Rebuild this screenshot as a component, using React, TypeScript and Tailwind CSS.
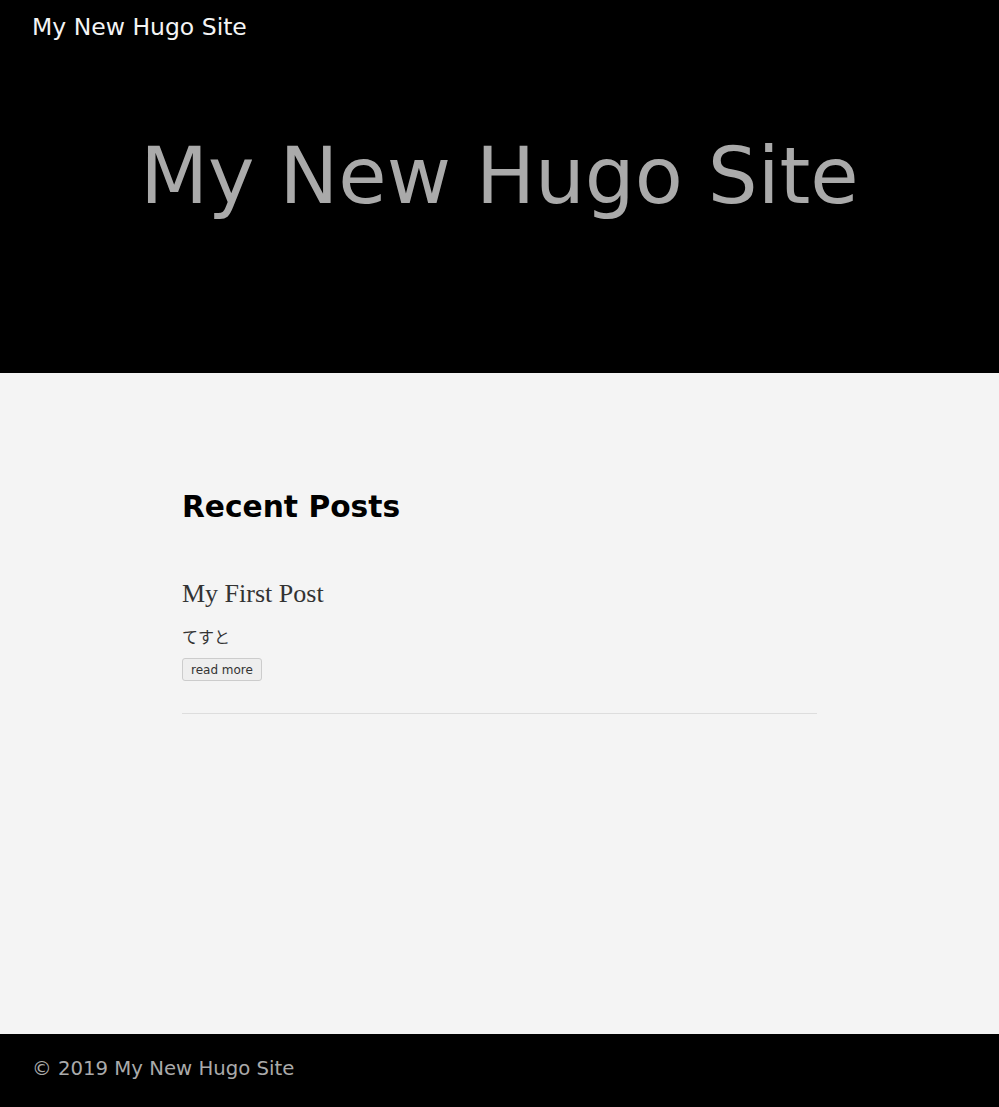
import React from "react";

export default function App() {
  const sans = { fontFamily: '"DejaVu Sans", "Noto Sans CJK JP", sans-serif' };
  return (
    <div className="min-h-[1107px] flex flex-col bg-[#f4f4f4]" style={sans}>
      <header className="bg-black h-[373px] flex flex-col">
        <div className="px-[32px] pt-[12px] text-[23.5px] leading-[30px] text-[#f4f4f4]">My New Hugo Site</div>
        <div className="flex-1 flex justify-center pt-[84px]">
          <h1 className="text-[78.6px] leading-[100px] text-[#aaaaaa]">My New Hugo Site</h1>
        </div>
      </header>
      <main className="flex-1 flex justify-center">
        <div className="w-[635px] pt-[114px]">
          <h2 className="text-[29.7px] leading-[40px] font-bold text-black">Recent Posts</h2>
          <div className="mt-[52px] border-b border-[#dddddd] pb-[32px]">
            <h3 className="text-[26px] leading-[30px] text-[#333333]" style={{ fontFamily: '"Liberation Serif", serif' }}>My First Post</h3>
            <p className="mt-[18px] text-[16px] leading-[22px] text-[#333333]">てすと</p>
            <button className="mt-[9px] px-[8px] h-[23px] text-[12px] text-[#333333] bg-[#eeeeee] border border-[#cccccc] rounded-[3px]">read more</button>
          </div>
        </div>
      </main>
      <footer className="bg-black h-[73px] flex items-center pb-[4px] px-[32px] text-[19.7px] text-[#aaaaaa]">© 2019 My New Hugo Site</footer>
    </div>
  );
}
